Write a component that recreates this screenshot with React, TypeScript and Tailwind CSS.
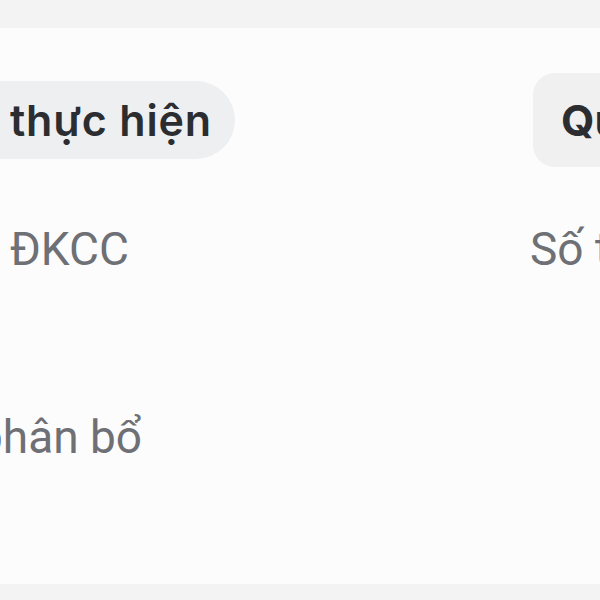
export default function App() {
  return (
    <div className="h-[600px] w-[600px] overflow-hidden bg-[#f3f3f3] pt-[28px] font-['Roboto',sans-serif]">
      <div className="flex h-[556px] bg-[#fcfcfc]">
        <div className="flex w-[530px] shrink-0 flex-col items-start">
          <div className="mt-[53px] flex h-[78px] w-[235px] items-center rounded-r-full bg-[#eeeff1] pl-[10px] font-['Inter',sans-serif] text-[43px] font-semibold leading-none tracking-[0.8px] text-[#2b2d31]">
            thực hiện
          </div>
          <div className="mt-[67px] pl-[10px] text-[46px] leading-none text-[#6e7075]">ĐKCC</div>
          <div className="ml-[-23px] mt-[142px] whitespace-nowrap text-[46px] leading-none text-[#6e7075]">
            phân bổ
          </div>
        </div>
        <div className="flex min-w-0 flex-1 flex-col items-start">
          <div className="ml-[3px] mt-[45px] flex h-[94px] items-center whitespace-nowrap rounded-l-[22px] bg-[#f0f0f1] pl-[28px] pr-[20px] font-['Inter',sans-serif] text-[43px] font-bold leading-none text-[#2b2d31]">
            Quy mô
          </div>
          <div className="mt-[59px] whitespace-nowrap text-[46px] leading-none text-[#6e7075]">Số tiền</div>
        </div>
      </div>
    </div>
  );
}
